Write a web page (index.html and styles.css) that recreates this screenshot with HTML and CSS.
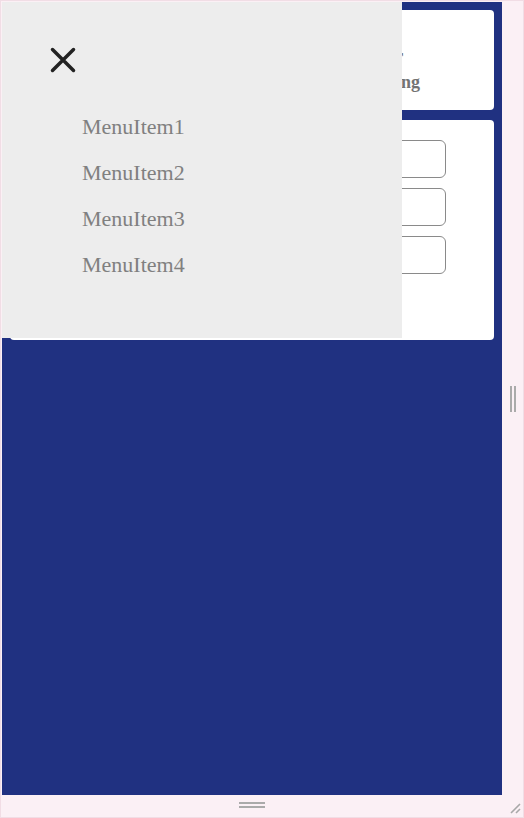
FILE: index.html
```html
<!DOCTYPE html>
<html>
<head>
<meta charset="utf-8">
<link rel="stylesheet" href="styles.css">
</head>
<body>
<div class="frame">
  <div class="viewport">
    <div class="content">
      <div class="card card-head">
        <h1 class="title">A simple page that shows a side navigation bar for<br>the responsive layouts with a sliding drawer opening</h1>
      </div>
      <div class="card card-form">
        <input class="field" type="text">
        <input class="field" type="text">
        <input class="field" type="text">
      </div>
    </div>
    <nav class="drawer">
      <button class="close" aria-label="Close">
        <svg width="26" height="26" viewBox="0 0 26 26"><path d="M2.5 2.5 L23.5 23.5 M23.5 2.5 L2.5 23.5" stroke="#222" stroke-width="3.5" stroke-linecap="round" fill="none"/></svg>
      </button>
      <ul class="menu">
        <li>MenuItem1</li>
        <li>MenuItem2</li>
        <li>MenuItem3</li>
        <li>MenuItem4</li>
      </ul>
    </nav>
  </div>
  <div class="side-handle"><span></span><span></span></div>
  <div class="bottom-handle"><span></span><span></span></div>
  <div class="corner">
    <svg width="12" height="12" viewBox="0 0 12 12"><path d="M11 2 L2 11 M11 7 L7 11" stroke="#a8a8a8" stroke-width="1.6" fill="none"/></svg>
  </div>
</div>
</body>
</html>
```
FILE: styles.css
```css
html, body {
  margin: 0;
  padding: 0;
  background: #fbf0f5;
}
.frame {
  box-sizing: border-box;
  width: 524px;
  height: 818px;
  border: 1px solid #f1dde5;
  padding: 1px;
  background: #fbf0f5;
  display: grid;
  grid-template-columns: 500px 1fr;
  grid-template-rows: 793px 1fr;
}
.viewport {
  position: relative;
  background: #203181;
  overflow: hidden;
}
.content {
  padding: 8px;
  display: flex;
  flex-direction: column;
  gap: 10px;
}
.card {
  background: #fff;
  border-radius: 4px;
}
.card-head {
  height: 100px;
  box-sizing: border-box;
  padding: 33px 0 0 8px;
}
.title {
  margin: 0;
  font-family: "Liberation Serif", serif;
  font-weight: bold;
  font-size: 18px;
  line-height: 26px;
  color: #737373;
  white-space: nowrap;
}
.card-form {
  height: 220px;
  box-sizing: border-box;
  padding-top: 20px;
  display: flex;
  flex-direction: column;
  align-items: center;
  gap: 10px;
}
.field {
  box-sizing: border-box;
  width: 388px;
  height: 38px;
  border: 1px solid #8a8a8a;
  border-radius: 6px;
  background: #fff;
  margin: 0;
}
.drawer {
  position: absolute;
  left: 0;
  top: 0;
  width: 400px;
  height: 336px;
  box-sizing: border-box;
  background: #ededed;
  padding: 45px 0 0 48px;
}
.close {
  display: block;
  border: 0;
  padding: 0;
  background: none;
  width: 26px;
  height: 26px;
}
.close svg { display: block; }
.menu {
  list-style: none;
  margin: 31px 0 0 32px;
  padding: 0;
  font-family: "Liberation Serif", serif;
  font-size: 22px;
  line-height: 46px;
  color: #808080;
}
.side-handle {
  display: flex;
  justify-content: center;
  align-items: center;
  gap: 2px;
  padding-left: 2px;
}
.side-handle span {
  width: 2px;
  height: 26px;
  background: #aaa;
}
.bottom-handle {
  display: flex;
  flex-direction: column;
  align-items: center;
  gap: 2px;
  padding-top: 7px;
}
.bottom-handle span {
  width: 26px;
  height: 2px;
  background: #aaa;
}
.corner {
  display: flex;
  align-items: flex-end;
  justify-content: flex-end;
  padding: 0 1px 2px 0;
}
.corner svg { display: block; }
```
